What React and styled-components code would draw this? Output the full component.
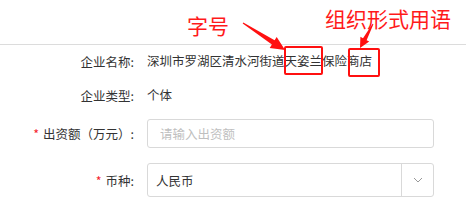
import React from 'react'
import styled, { createGlobalStyle } from 'styled-components'

const GlobalStyle = createGlobalStyle`
    html, body {
        margin: 0;
        padding: 0;
        background: #fff;
    }
    body {
        font-family: "Noto Sans CJK SC", "Liberation Sans", sans-serif;
        color: #333;
    }
`;

const rows = [
    { label: "企业名称:", type: "name" },
    { label: "企业类型:", value: "个体" },
    { label: "出资额（万元）:", required: true, type: "input", placeholder: "请输入出资额" },
    { label: "币种:", required: true, type: "select", value: "人民币" },
];

const App = () => {
    return (
        <Page>
            <GlobalStyle />
            <Header>
                <Callout $left={187} $top={15}>字号</Callout>
                <Callout $left={325} $top={8}>组织形式用语</Callout>
            </Header>
            <Form>
                {rows.map((row, i) => (
                    <Row key={i} $index={i}>
                        <Label>
                            {row.required && <Star>*</Star>}
                            {row.label}
                        </Label>
                        {row.type === "name" && (
                            <Value>
                                深圳市罗湖区清水河街道
                                <Marked $l={-1} $r={-1} $t={0} $b={1}>天姿兰</Marked>
                                保险
                                <Marked $l={1} $r={-8} $t={2} $b={-1}>商店</Marked>
                            </Value>
                        )}
                        {row.type === undefined && <Value>{row.value}</Value>}
                        {row.type === "input" && <TextInput placeholder={row.placeholder} />}
                        {row.type === "select" && (
                            <Select>
                                <SelectText>{row.value}</SelectText>
                                <SelectArrow>
                                    <svg width="10" height="6" viewBox="0 0 10 6">
                                        <polyline points="1,1 5,5 9,1" fill="none" stroke="#999" strokeWidth="1" />
                                    </svg>
                                </SelectArrow>
                            </Select>
                        )}
                    </Row>
                ))}
            </Form>
            <Arrows width="466" height="211" viewBox="0 0 466 211">
                <polygon
                    fill="#ff1010"
                    points="243.3,22.6 274.6,40.3 276.7,36.9 285,50 269.7,47.9 271.9,44.5 242.7,23.4" />
                <polygon
                    fill="#ff1010"
                    points="373.4,24.2 366.6,40.2 369.2,41.6 360,48 360.4,36.8 363,38.2 372.6,23.8" />
            </Arrows>
        </Page>
    )
}

const Page = styled.div`
    position: relative;
    width: 466px;
    height: 211px;
    overflow: hidden;
    background: #fff;
`;

const Header = styled.div`
    position: relative;
    height: 44px;
    border-bottom: 1px solid #dcdcdc;
`;

const Callout = styled.div`
    position: absolute;
    left: ${p => p.$left}px;
    top: ${p => p.$top}px;
    font-size: 21px;
    line-height: 1;
    color: #ff1a1a;
    white-space: nowrap;
`;

const Form = styled.div`
    display: flex;
    flex-direction: column;
    padding-top: 1px;
`;

const rowMargins = [0, 4, 8, 15];

const Row = styled.div`
    display: flex;
    align-items: center;
    min-height: 30px;
    margin-top: ${p => rowMargins[p.$index]}px;
    font-size: 12.5px;
`;

const Label = styled.div`
    width: 134px;
    flex-shrink: 0;
    margin-right: 13px;
    text-align: right;
    color: #333;
    white-space: nowrap;
`;

const Star = styled.span`
    color: #f5222d;
    margin-right: 4px;
`;

const Value = styled.div`
    line-height: 30px;
    color: #333;
    white-space: nowrap;
`;

const Marked = styled.span`
    position: relative;
    display: inline-block;
    line-height: 30px;
    &::after {
        content: "";
        position: absolute;
        left: ${p => p.$l}px;
        right: ${p => p.$r}px;
        top: ${p => p.$t}px;
        bottom: ${p => p.$b}px;
        border: 2px solid #ff1010;
        border-radius: 2px;
    }
`;

const TextInput = styled.input`
    box-sizing: border-box;
    width: 287px;
    height: 29px;
    padding: 0 12px;
    border: 1px solid #d9d9d9;
    border-radius: 3px;
    font-family: inherit;
    font-size: 12.5px;
    color: #333;
    outline: none;
    &::placeholder {
        color: #bfbfbf;
    }
`;

const Select = styled.div`
    box-sizing: border-box;
    display: flex;
    width: 287px;
    height: 34px;
    border: 1px solid #d9d9d9;
    border-radius: 3px;
`;

const SelectText = styled.div`
    flex: 1;
    display: flex;
    align-items: center;
    padding-left: 8px;
    color: #333;
`;

const SelectArrow = styled.div`
    width: 31px;
    display: flex;
    align-items: center;
    justify-content: center;
    border-left: 1px solid #d9d9d9;
`;

const Arrows = styled.svg`
    position: absolute;
    left: 0;
    top: 0;
    pointer-events: none;
`;

export default App;
